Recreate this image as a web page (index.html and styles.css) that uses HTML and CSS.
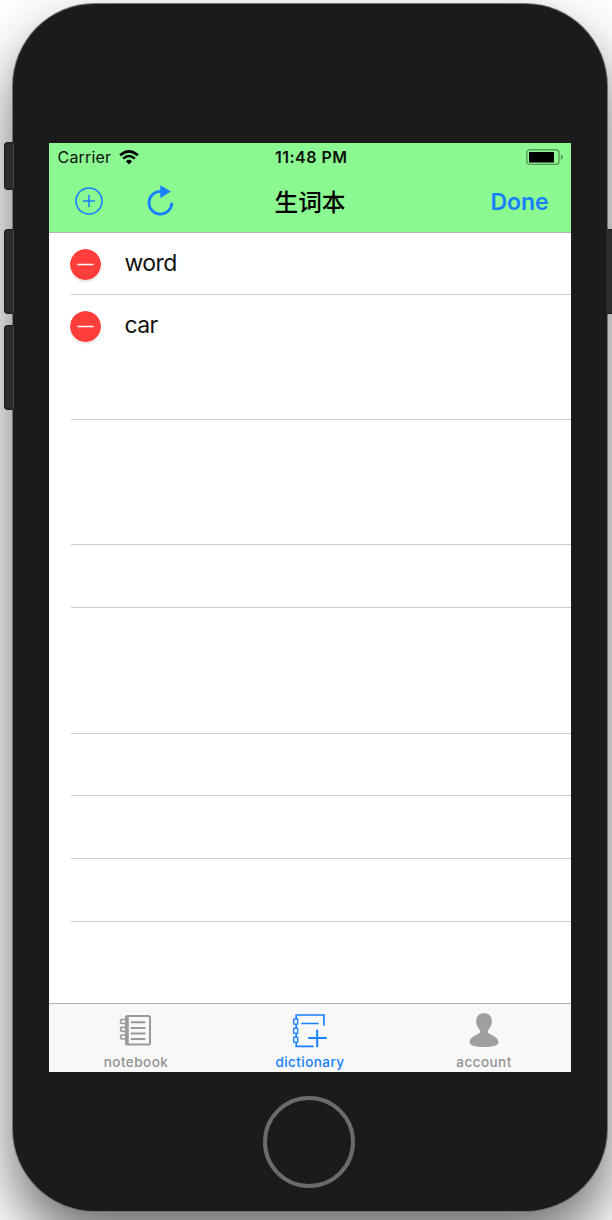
FILE: index.html
```html
<!DOCTYPE html>
<html lang="zh">
<head>
<meta charset="utf-8">
<title>生词本</title>
<link rel="stylesheet" href="styles.css">
</head>
<body>
<div class="phone">
  <i class="side mute"></i><i class="side vol-up"></i><i class="side vol-down"></i><i class="side power"></i>
  <main class="screen">
    <header class="top">
      <div class="status">
        <div class="carrier"><span>Carrier</span>
          <svg width="20" height="15" viewBox="0 0 20 15" fill="none" stroke="#000" stroke-width="2.6"><path d="M1.1 5.3Q10-2.5 18.9 5.3"/><path d="M4.2 8.6Q10 3.4 15.8 8.6"/><path d="M6.9 11.2Q10 8.5 13.1 11.2L10 14.4Z" fill="#000" stroke="none"/></svg>
        </div>
        <span class="time">11:48 PM</span>
        <svg class="battery" width="38" height="17" viewBox="0 0 38 17"><rect x=".8" y=".8" width="32.2" height="14.6" rx="3" fill="none" stroke="#579b5c" stroke-width="1.4"/><rect x="3" y="3" width="25" height="10.5" fill="#000"/><path d="M34.8 5.3Q37 6.2 37 8.1T34.8 11Z" fill="#579b5c"/></svg>
      </div>
      <nav class="nav">
        <div class="actions">
          <svg width="28" height="28" viewBox="0 0 28 28" fill="none" stroke="#1780ff" stroke-width="1.6"><circle cx="14" cy="14" r="13"/><path d="M8 14h12M14 8v12"/></svg>
          <svg width="28" height="32" viewBox="0 0 28 32"><path d="M14.5 6.3H13.3A11.4 11.4 0 1 0 24.8 17.8" fill="none" stroke="#1780ff" stroke-width="2.8"/><path d="M13.3.2L24 6.4 13.3 13Z" fill="#1780ff"/></svg>
        </div>
        <h1 class="title">生词本</h1>
        <span class="done">Done</span>
      </nav>
    </header>
    <section class="list">
      <div class="row word-row first"><svg class="remove" width="31" height="31" viewBox="0 0 31 31"><circle cx="15.5" cy="15.5" r="15.5" fill="#ff3e3b"/><path d="M7.5 15.5h16" stroke="#fff" stroke-width="1.6"/></svg><span>word</span></div>
      <div class="row double word-row"><svg class="remove" width="31" height="31" viewBox="0 0 31 31"><circle cx="15.5" cy="15.5" r="15.5" fill="#ff3e3b"/><path d="M7.5 15.5h16" stroke="#fff" stroke-width="1.6"/></svg><span>car</span></div>
      <div class="row double"></div>
      <div class="row"></div>
      <div class="row double"></div>
      <div class="row"></div>
      <div class="row"></div>
      <div class="row"></div>
    </section>
    <footer class="tabs">
      <div class="tab">
        <svg width="40" height="40" viewBox="0 0 40 40" fill="none" stroke="#999" stroke-width="2"><g transform="translate(-.5 1)"><path d="M12 6H33a1.500 1.500 0 0 1 1.500 1.500V33a1.500 1.500 0 0 1-1.500 1.500H12a1.500 1.500 0 0 1-1.500-1.500V7.500A1.500 1.500 0 0 1 12 6Z"/><path d="M11.500 6V34.500" stroke-width="3.500"/><path d="M16 12.300h13M16 18h13M16 23.500h13M16 29h13" stroke-linecap="round"/><g fill="#f8f8f8" stroke-width="1.700"><rect x="5" y="9.500" width="5.500" height="4" rx="1.500"/><rect x="5" y="17.300" width="5.500" height="4" rx="1.500"/><rect x="5" y="25" width="5.500" height="4" rx="1.500"/></g></g></svg>
        <span>notebook</span>
      </div>
      <div class="tab selected">
        <svg width="40" height="40" viewBox="0 0 40 40" fill="none" stroke="#1780ff" stroke-width="1.700"><g transform="translate(-.8 .3)"><path d="M34.700 16.500V5.700H7V37H24.500M12 14.200H29.500"/><path d="M28 20.500V38M19 28.800H37.500" stroke-width="2"/><g fill="#f8f8f8" stroke-width="1.300"><rect x="4.500" y="9.800" width="4" height="5"/><rect x="4.500" y="18.900" width="4" height="5"/><rect x="4.500" y="27.900" width="4" height="5"/></g></g></svg>
        <span>dictionary</span>
      </div>
      <div class="tab">
        <svg width="40" height="40" viewBox="0 0 40 40"><path d="M20 4.300C25.500 4.300 28.200 8 27.800 13C27.400 18 23.700 20.500 23.700 23C24.500 26 34.400 26.500 34.400 33.500C34.400 36.500 28 38 20 38S5.600 36.500 5.600 33.500C5.600 26.500 15.500 26 16.300 23C16.300 20.500 12.600 18 12.200 13C11.800 8 14.500 4.300 20 4.300Z" fill="#9f9f9f"/></svg>
        <span>account</span>
      </div>
    </footer>
  </main>
  <div class="home"></div>
</div>
</body>
</html>
```
FILE: styles.css
```css
* { box-sizing: border-box; }
body {
  margin: 0;
  width: 612px;
  height: 1220px;
  overflow: hidden;
  padding: 4px 0 0 13px;
  background: #fff;
  font-family: Inter, "Noto Sans CJK SC", sans-serif;
}
svg { display: block; flex: none; }
.phone {
  position: relative;
  width: 594px;
  height: 1207px;
  padding: 139px 36px 0;
  border-radius: 82px;
  background: #1b1b1b;
  box-shadow: 0 0 0 1px #737373, 0 30px 58px rgba(0, 0, 0, .58);
}
.side {
  position: absolute;
  left: -9px;
  width: 10px;
  height: 85px;
  border: 1px solid #1c1c1c;
  border-right-color: #444;
  border-radius: 4px 0 0 4px;
  background: #2c2c2c;
}
.mute { top: 138px; height: 48px; }
.vol-up { top: 225px; }
.vol-down { top: 321px; }
.power { top: 225px; left: 592px; border-radius: 0 4px 4px 0; }
.screen {
  display: flex;
  flex-direction: column;
  width: 522px;
  height: 929px;
  background: #fff;
}
.top {
  height: 90px;
  border-bottom: 1px solid #adb9ad;
  background: #8cf892;
}
.status {
  display: grid;
  grid-template-columns: 1fr auto 1fr;
  align-items: center;
  height: 29px;
  padding: 0 7px 0 8.500px;
  color: #0a120a;
}
.carrier {
  display: flex;
  align-items: center;
  gap: 8px;
  font-size: 16px;
  letter-spacing: .2px;
}
.carrier span, .time { padding-bottom: 2px; }
.time {
  font-size: 16px;
  font-weight: 600;
  letter-spacing: .5px;
  margin-right: -1px;
}
.battery { justify-self: end; }
.nav {
  display: grid;
  grid-template-columns: 1fr auto 1fr;
  align-items: center;
  height: 59px;
  padding: 0 22.500px 0 25.500px;
}
.actions { display: flex; align-items: center; gap: 44px; margin-top: -2px; }
.title {
  margin: -2px 3px 0 0;
  font-family: "Noto Sans CJK SC", sans-serif;
  font-size: 23.700px;
  font-weight: 500;
  line-height: 36px;
}
.done {
  justify-self: end;
  color: #1780ff;
  font-size: 23px;
  font-weight: 600;
  letter-spacing: -.1px;
}
.list { flex: 1; padding-left: 22px; }
.row { height: 62.700px; border-bottom: 1px solid #ccc; }
.double { height: 125.400px; }
.first { height: 61.700px; }
.word-row {
  display: flex;
  align-items: flex-start;
  gap: 23.500px;
  padding-top: 16px;
  font-size: 23px;
  letter-spacing: -.6px;
  line-height: 29px;
  color: #111;
}
.remove {
  margin-left: -1px;
  border-radius: 50%;
  box-shadow: 0 2px 2px rgba(0, 0, 0, .1);
}
.tabs {
  display: grid;
  grid-template-columns: repeat(3, 1fr);
  height: 69px;
  border-top: 1px solid #b2b2b2;
  background: #f8f8f8;
}
.tab {
  display: flex;
  flex-direction: column;
  align-items: center;
  padding-top: 5px;
  color: #929292;
  font-size: 13.500px;
  font-weight: 500;
  letter-spacing: .45px;
  line-height: 18px;
}
.tab span { margin-top: 4px; }
.selected { color: #1780ff; }
.home {
  width: 92px;
  height: 92px;
  margin: 24px 0 0 214px;
  border: 4px solid #6b6b6b;
  border-radius: 50%;
}
```
